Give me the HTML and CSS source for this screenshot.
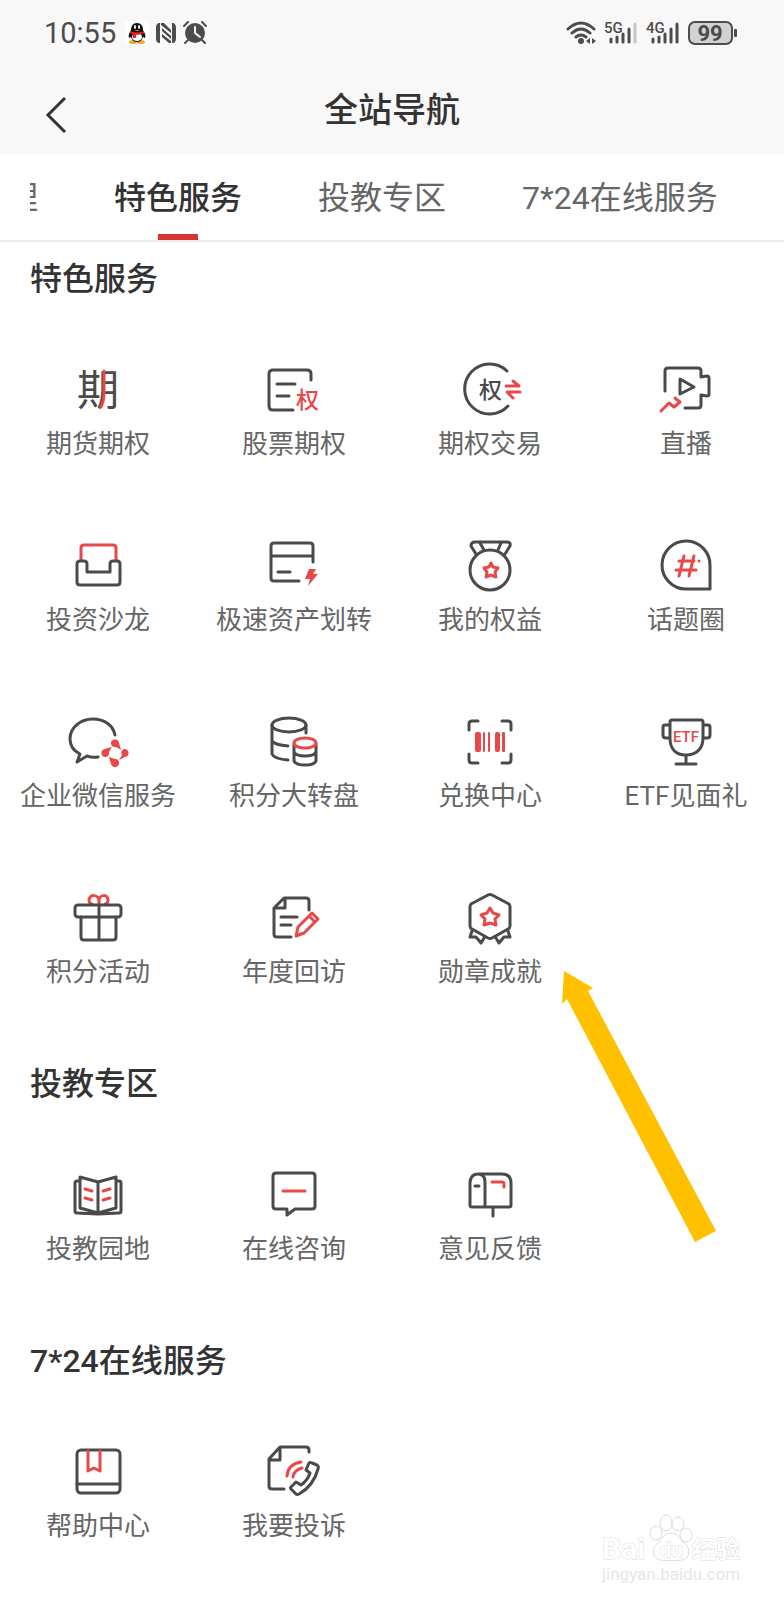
FILE: index.html
```html
<!DOCTYPE html>
<html lang="zh-CN">
<head>
<meta charset="UTF-8">
<meta name="viewport" content="width=device-width, initial-scale=1">
<title>全站导航</title>
<link rel="stylesheet" href="styles.css">
</head>
<body>
<div class="page">
<header class="header">
<div class="status">
<div class="status-left">
<span class="time">10:55</span>
<svg width="24" height="24" viewBox="0 0 24 24">
<rect width="24" height="24" rx="4" fill="#fff"/>
<ellipse cx="8" cy="21" rx="4" ry="2" fill="#f5a623"/>
<ellipse cx="16" cy="21" rx="4" ry="2" fill="#f5a623"/>
<path d="M12 2C8 2 6 5 6 9C4 12 3 15 4 17L6 16C7 19 9 21 12 21S17 19 18 16L20 17C21 15 20 12 18 9C18 5 16 2 12 2Z" fill="#111"/>
<ellipse cx="12" cy="16" rx="5" ry="4" fill="#fff"/>
<ellipse cx="10" cy="6" rx="1" ry="2" fill="#fff"/>
<ellipse cx="14" cy="6" rx="1" ry="2" fill="#fff"/>
<path d="M9 9H15L12 10Z" fill="#f5a623"/>
<path d="M5 10Q12 13 19 10V12Q15 14 11 14V17H8V13L5 12Z" fill="#e22"/>
</svg>
<svg width="22" height="24" viewBox="0 0 22 24">
<path d="M5 2C2 2 1 4 1 7V17C1 20 2 22 5 22V2ZM17 2C20 2 21 4 21 7V17C21 20 20 22 17 22Z" fill="#4c4c4c"/>
<path d="M6 2H9L16 9V12L6 4ZM7 7L16 15V18L7 10ZM7 13L16 20V22H14L7 16Z" fill="#4c4c4c"/>
</svg>
<svg width="24" height="24" viewBox="0 0 24 24">
<circle cx="12" cy="12" r="10" fill="#4c4c4c"/>
<path d="M1 5L5 1M23 5L19 1M5 19L2 22M19 19L22 22" stroke="#4c4c4c" stroke-width="2" stroke-linecap="round"/>
<path d="M12 6V12L17 16" fill="none" stroke="#f8f8f8" stroke-width="2" stroke-linecap="round"/>
</svg>
</div>
<div class="status-right">
<svg width="30" height="24" viewBox="0 0 30 24">
<g fill="none" stroke="#4c4c4c" stroke-width="3" stroke-linecap="round">
<path d="M2 8Q15 -4 28 8M6 12Q15 4 24 12M10 16Q15 12 20 16"/>
</g>
<circle cx="15" cy="20" r="3" fill="#4c4c4c"/>
<path d="M24 17V23L20 20ZM26 17V23L30 20Z" fill="#4c4c4c"/>
</svg>
<svg width="34" height="24" viewBox="0 0 34 24">
<text x="0" y="12" class="net">5G</text>
<g stroke="#4c4c4c" stroke-width="3" stroke-linecap="round">
<path d="M7 18V21M13 16V21M19 13V21M25 8V21"/>
<path d="M31 3V21" stroke="#c6c6c6"/>
</g>
</svg>
<svg width="34" height="24" viewBox="0 0 34 24">
<text x="0" y="12" class="net">4G</text>
<path d="M7 18V21M13 16V21M19 13V21M25 8V21M31 3V21" stroke="#4c4c4c" stroke-width="3" stroke-linecap="round"/>
</svg>
<svg width="50" height="26" viewBox="0 0 50 26">
<rect x="1" y="2" width="43" height="22" rx="6" fill="#d2d2d2" stroke="#4c4c4c" stroke-width="2"/>
<text x="22" y="21" text-anchor="middle" class="charge">99</text>
<rect x="46" y="9" width="3" height="8" rx="1" fill="#4c4c4c"/>
</svg>
</div>
</div>
<div class="navbar">
<button class="back" type="button" aria-label="返回">
<svg width="24" height="38" viewBox="0 0 24 38"><path d="M20 2L3 19L20 36" fill="none" stroke="#333" stroke-width="3"/></svg>
</button>
<h1>全站导航</h1>
</div>
</header>

<nav class="tabs">
<div class="tabs-scroll">
<a class="tab tab-cut" href="#">理</a>
<a class="tab active" href="#feature">特色服务</a>
<a class="tab" href="#edu">投教专区</a>
<a class="tab" href="#online">7*24在线服务</a>
</div>
</nav>

<main>
<section id="feature">
<h2>特色服务</h2>
<div class="grid">
<a class="item" href="#">
<svg class="icon" viewBox="0 0 64 60">
<text x="11" y="45" class="glyph-lg">期</text>
<path class="r" d="M38 11V32Q38 41 35 47"/>
</svg>
<span>期货期权</span>
</a>
<a class="item" href="#">
<svg class="icon" viewBox="0 0 64 60">
<path d="M49 20V14Q49 10 45 10H11Q7 10 7 14V46Q7 50 11 50H31M15 24H33M15 36H27"/>
<text x="34" y="48" class="glyph red">权</text>
</svg>
<span>股票期权</span>
</a>
<a class="item" href="#">
<svg class="icon" viewBox="0 0 64 60">
<path d="M49 11A25 25 0 1 0 50 46"/>
<text x="21" y="38" class="glyph">权</text>
<path class="r" d="M48 26H61L55 21M62 32H49L55 38"/>
</svg>
<span>期权交易</span>
</a>
<a class="item" href="#">
<svg class="icon" viewBox="0 0 64 60">
<path d="M11 31V11Q11 8 14 8H44Q47 8 47 11V17L53 16Q55 16 55 18V34Q55 36 53 36L47 35V45Q47 48 44 48H31M26 19L40 27L26 34Z"/>
<path class="r" d="M7 51L15 43L20 47L26 42L21 38"/>
</svg>
<span>直播</span>
</a>
<a class="item" href="#">
<svg class="icon" viewBox="0 0 64 60">
<path class="r" d="M15 24V12Q15 9 18 9H47Q50 9 50 12V24"/>
<path d="M14 25H18Q21 25 21 28V36H44V28Q44 25 47 25H51Q54 25 54 28V46Q54 49 51 49H14Q11 49 11 46V28Q11 25 14 25Z"/>
</svg>
<span>投资沙龙</span>
</a>
<a class="item" href="#">
<svg class="icon" viewBox="0 0 64 60">
<path d="M51 26V10Q51 7 48 7H12Q9 7 9 10V42Q9 45 12 45H37M9 20H51M16 36H28"/>
<path class="fill-r" d="M47 33H54L51 38H56L46 50L48 43H43Z"/>
</svg>
<span>极速资产划转</span>
</a>
<a class="item" href="#">
<svg class="icon" viewBox="0 0 64 60">
<circle cx="32" cy="34" r="20"/>
<path d="M18 18L13 10Q13 6 17 6H49Q53 6 52 10L47 18M22 7L26 14M43 7L40 14"/>
<path class="r" d="M33 27L35 31L40 32L37 36L38 41L33 39L28 41L29 36L26 32L31 31Z"/>
</svg>
<span>我的权益</span>
</a>
<a class="item" href="#">
<svg class="icon" viewBox="0 0 64 60">
<path d="M56 53V30A24 24 0 1 0 32 53Z"/>
<path class="r" d="M30 20L25 40M40 20L35 40M25 25H40M22 34H42M45 25H45"/>
</svg>
<span>话题圈</span>
</a>
<a class="item" href="#">
<svg class="icon" viewBox="0 0 64 60">
<path d="M49 23C47 13 38 7 27 7C14 7 4 16 4 27C4 34 8 39 14 42L11 50L21 44Q26 46 32 45"/>
<path class="fill-r" d="M45 32A4 4 0 1 1 53 31L55 38L50 35A4 4 0 0 1 45 32ZM58 37A4 4 0 1 1 59 45L53 48L56 43A4 4 0 0 1 58 37ZM53 50A4 4 0 1 1 45 52L43 45L49 47A4 4 0 0 1 53 50ZM40 45A4 4 0 1 1 39 37L46 35L43 40A4 4 0 0 1 40 45Z"/>
</svg>
<span>企业微信服务</span>
</a>
<a class="item" href="#">
<svg class="icon" viewBox="0 0 64 60">
<ellipse cx="27" cy="13" rx="17" ry="7"/>
<path d="M10 13V42Q12 47 26 48M10 29Q13 33 26 34M44 13V21"/>
<path d="M32 32V49Q34 53 43 53T54 49V32M32 40Q34 44 43 44T54 40"/>
<ellipse class="r" cx="43" cy="31" rx="11" ry="5"/>
</svg>
<span>积分大转盘</span>
</a>
<a class="item" href="#">
<svg class="icon" viewBox="0 0 64 60">
<path d="M11 18V12Q11 9 14 9H20M44 9H50Q53 9 53 12V18M53 42V48Q53 51 50 51H44M20 51H14Q11 51 11 48V42"/>
<g class="fill-r">
<rect x="17" y="20" width="6" height="20" rx="2"/>
<rect x="25" y="20" width="2" height="20" rx="1"/>
<rect x="30" y="20" width="2" height="20" rx="1"/>
<rect x="37" y="20" width="5" height="20" rx="2"/>
<rect x="44" y="20" width="3" height="20" rx="1"/>
</g>
</svg>
<span>兑换中心</span>
</a>
<a class="item" href="#">
<svg class="icon" viewBox="0 0 64 60">
<path d="M18 8H47Q49 8 49 10V26C49 37 42 43 32 43S16 37 16 26V10Q16 8 18 8ZM32 43V52M22 52H42M16 13H11Q9 13 9 15V23Q9 26 12 26H16M49 13H54Q56 13 56 15V23Q56 26 53 26H49"/>
<text x="32" y="30" text-anchor="middle" class="etf">ETF</text>
</svg>
<span>ETF见面礼</span>
</a>
<a class="item" href="#">
<svg class="icon" viewBox="0 0 64 60">
<path class="r" d="M33 16V13C33 6 23 6 23 12C23 14 24 16 26 16M33 13C33 6 42 6 42 12C42 14 41 16 39 16"/>
<rect x="9" y="17" width="46" height="12" rx="3"/>
<path d="M15 29V49Q15 52 18 52H47Q50 52 50 49V29M33 17V52"/>
</svg>
<span>积分活动</span>
</a>
<a class="item" href="#">
<svg class="icon" viewBox="0 0 64 60">
<path d="M47 22V13Q47 10 44 10H22L12 20V46Q12 49 15 49H29M23 10V20H12M19 29H35M19 37H29"/>
<path class="r" d="M34 48L36 39L50 25L56 31L42 45ZM47 28L53 34"/>
</svg>
<span>年度回访</span>
</a>
<a class="item" href="#">
<svg class="icon" viewBox="0 0 64 60">
<path d="M30 7Q32 6 34 7L51 16Q52 17 52 19V38Q52 40 50 41L34 50Q32 51 30 50L14 41Q12 40 12 38V19Q12 17 13 16ZM14 43L12 49L18 49L23 55L26 50M50 43L52 49L46 49L41 55L38 50"/>
<path class="r" d="M32 20L35 25L41 27L37 31L38 37L32 35L26 37L27 31L23 27L29 25Z"/>
</svg>
<span>勋章成就</span>
</a>
</div>
</section>

<section id="edu">
<h2>投教专区</h2>
<div class="grid">
<a class="item" href="#">
<svg class="icon" viewBox="0 0 64 60">
<path d="M14 16H11Q9 16 9 18V46Q9 48 11 48L32 49L53 48Q55 48 55 46V18Q55 16 53 16H50M14 12L32 17L50 12V43L32 48L14 43ZM32 17V48"/>
<path class="r" d="M19 24L26 26M19 33L26 35M44 24L37 26M44 33L37 35"/>
</svg>
<span>投教园地</span>
</a>
<a class="item" href="#">
<svg class="icon" viewBox="0 0 64 60">
<path d="M14 8H50Q53 8 53 11V41Q53 44 50 44H33L25 50V44H14Q11 44 11 41V11Q11 8 14 8Z"/>
<path class="r" d="M21 26H43"/>
</svg>
<span>在线咨询</span>
</a>
<a class="item" href="#">
<svg class="icon" viewBox="0 0 64 60">
<path d="M27 42V17Q27 9 20 9T12 17V40Q12 42 14 42H51Q53 42 53 40V18Q53 9 44 9H20M35 42V51M17 21H21"/>
<path class="r" d="M34 17H44Q46 17 46 19V22"/>
</svg>
<span>意见反馈</span>
</a>
</div>
</section>

<section id="online">
<h2>7*24在线服务</h2>
<div class="grid">
<a class="item" href="#">
<svg class="icon" viewBox="0 0 64 60">
<rect x="11" y="8" width="43" height="43" rx="4"/>
<path d="M11 42H53"/>
<path class="r" d="M22 9V29L28 26L34 29V9"/>
</svg>
<span>帮助中心</span>
</a>
<a class="item" href="#">
<svg class="icon" viewBox="0 0 64 60">
<path d="M47 10V8Q47 5 44 5H18L7 17V44Q7 47 10 47H22M18 5V18H7"/>
<path d="M44 28L47 21Q48 20 50 21L55 23Q57 24 56 27C53 38 46 47 37 52Q35 53 34 52L29 47Q28 46 29 45L34 40L39 43Q46 38 48 31Z"/>
<path class="r" d="M25 34Q26 22 39 20M31 35Q32 28 40 26"/>
</svg>
<span>我要投诉</span>
</a>
</div>
</section>
</main>

<svg class="arrow" width="156" height="274" viewBox="0 0 156 274">
<path d="M3 1L32 18L27 21L155 261L134 272L6 29L1 34Z" fill="#ffc000"/>
</svg>

<svg class="watermark" width="146" height="76" viewBox="0 0 146 76">
<g fill="#fff" stroke="#dcdcdc" stroke-width="1">
<text x="2" y="47" class="wm-bai">Bai</text>
<ellipse cx="56" cy="21" rx="6" ry="7"/>
<ellipse cx="66" cy="11" rx="6" ry="8"/>
<ellipse cx="78" cy="12" rx="6" ry="7"/>
<ellipse cx="86" cy="23" rx="6" ry="7"/>
<path d="M71 21C63 21 62 28 56 33C51 38 53 47 60 48C66 49 76 49 82 48C89 47 91 38 86 33C80 28 79 21 71 21Z"/>
<text x="60" y="45" class="wm-du">du</text>
<text x="92" y="46" class="wm-cn">经验</text>
</g>
<text x="2" y="68" class="wm-url">jingyan.baidu.com</text>
</svg>
</div>
</body>
</html>
```
FILE: styles.css
```css
* {
box-sizing: border-box;
}

body {
margin: 0;
background-color: #fff;
font-family: "Roboto", "Noto Sans CJK SC", sans-serif;
color: #333;
}

a {
color: inherit;
text-decoration: none;
}

.page {
position: relative;
overflow: hidden;
}

/* status bar + title */
.header {
background-color: #f8f8f8;
}

.status {
display: flex;
justify-content: space-between;
align-items: center;
height: 66px;
padding: 0 46px 0 44px;
}

.status-left,
.status-right {
display: flex;
align-items: center;
gap: 8px;
}

.status-left {
gap: 6px;
}

.time {
font-size: 29px;
line-height: 36px;
color: #4c4c4c;
margin-right: 3px;
}

.net {
font-size: 15px;
font-weight: 500;
fill: #4c4c4c;
}

.charge {
font-size: 22px;
font-weight: bold;
fill: #4c4c4c;
}

.navbar {
display: grid;
grid-template-columns: 80px 1fr 80px;
align-items: center;
height: 88px;
}

.back {
padding: 10px 0 0 45px;
border: none;
background: none;
text-align: left;
cursor: pointer;
}

.back svg {
display: block;
}

h1 {
margin: 0;
font-size: 34px;
line-height: 48px;
font-weight: 500;
text-align: center;
}

/* tabs */
.tabs {
padding: 0 30px;
border-bottom: 2px solid #ebebeb;
}

.tabs-scroll {
display: flex;
gap: 76px;
overflow: hidden;
}

.tab {
display: flex;
flex-direction: column;
align-items: center;
flex: none;
height: 86px;
padding-top: 20px;
font-size: 32px;
line-height: 48px;
color: #666;
}

.tab-cut {
margin-left: -24px;
}

.tab.active {
color: #333;
font-weight: 500;
}

.tab.active::after {
content: "";
width: 40px;
height: 6px;
margin-top: auto;
background-color: #d93434;
}

/* sections */
main {
display: flex;
flex-direction: column;
gap: 70px;
padding: 13px 0 56px;
}

h2 {
margin: 0 0 57px;
padding: 0 30px;
font-size: 32px;
line-height: 48px;
font-weight: 500;
}

.grid {
display: grid;
grid-template-columns: repeat(4, 1fr);
row-gap: 74px;
}

.item {
display: flex;
flex-direction: column;
align-items: center;
gap: 6px;
font-size: 26px;
line-height: 36px;
color: #666;
white-space: nowrap;
}

.icon {
width: 64px;
height: 60px;
fill: none;
stroke: #4a4a4a;
stroke-width: 3;
stroke-linecap: round;
stroke-linejoin: round;
}

.icon .r {
stroke: #e84848;
}

.icon .fill-r {
fill: #e84848;
stroke: none;
}

.icon text {
fill: #4a4a4a;
stroke: none;
}

.icon .glyph-lg {
font-size: 42px;
font-weight: 400;
}

.icon .glyph {
font-size: 23px;
font-weight: 500;
}

.icon .etf {
font-size: 15px;
font-weight: 500;
fill: #e84848;
}

.icon .red {
fill: #e84848;
}

/* pointer over the grid */
.arrow {
position: absolute;
left: 561px;
top: 970px;
pointer-events: none;
}

.watermark {
position: absolute;
right: 38px;
bottom: 12px;
pointer-events: none;
}

.watermark text {
paint-order: stroke;
}

.wm-bai {
font-size: 30px;
font-weight: bold;
}

.wm-du {
font-size: 20px;
font-weight: bold;
}

.wm-cn {
font-size: 24px;
font-weight: bold;
}

.wm-url {
font-size: 17px;
fill: #e6e6e6;
}
```
